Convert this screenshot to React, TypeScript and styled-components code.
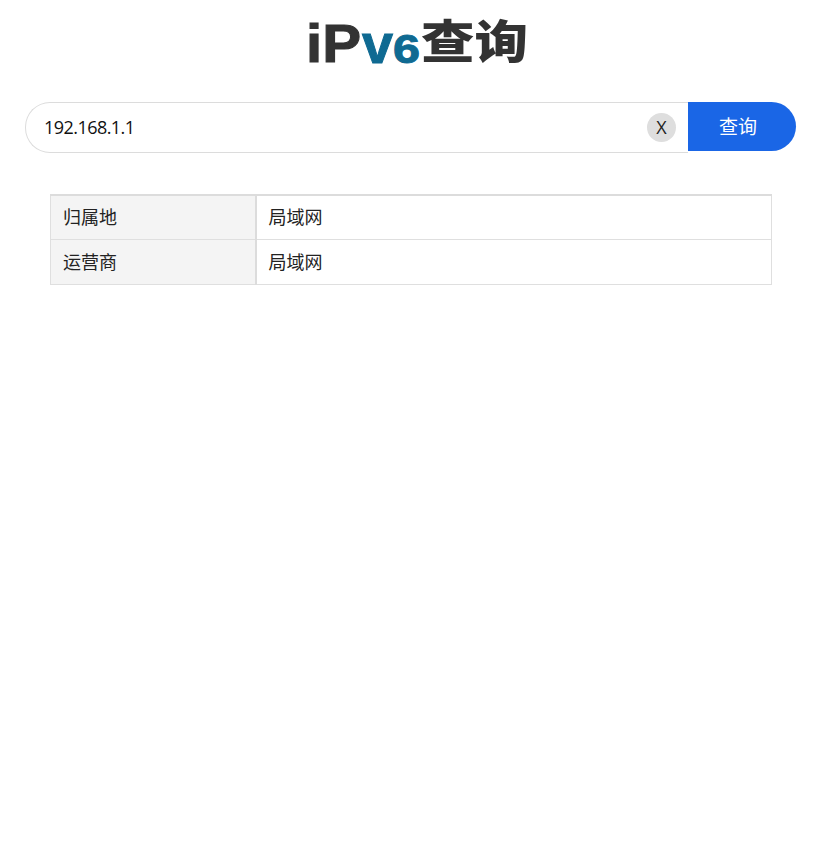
import React, { useState } from 'react'
import styled, { createGlobalStyle } from 'styled-components'

const GlobalStyle = createGlobalStyle`
    html, body {
        margin:0;
        padding:0;
        background:#fff;
        color:#111;
        font-family:"Noto Sans CJK SC","Open Sans",sans-serif;
    }
`;
const Page = styled.div`
    width:834px;
    height:859px;
    overflow:hidden;
`;
const LogoRow = styled.h1`
    height:76px;
    margin:0 0 26px;
    display:flex;
    justify-content:center;
`;
const LogoSvg = styled.svg`
    width:222px;
    height:76px;
    display:block;
`;
const SearchBar = styled.form`
    display:flex;
    align-items:flex-start;
    width:771px;
    margin:0 0 41px 25px;
`;
const InputWrap = styled.div`
    flex:1;
    height:51px;
    display:flex;
    align-items:center;
    box-sizing:border-box;
    border:1px solid #dcdcdc;
    border-right:none;
    border-radius:25px 0 0 25px;
    padding:0 12px 0 18px;
`;
const SearchInput = styled.input`
    flex:1;
    min-width:0;
    border:none;
    outline:none;
    padding:0 0 2px;
    font-family:"Open Sans",sans-serif;
    font-size:18px;
    letter-spacing:-0.55px;
    color:#111;
    background:transparent;
`;
const ClearButton = styled.button`
    width:29px;
    height:29px;
    padding:0;
    border:none;
    border-radius:50%;
    background:#dedede;
    color:#222;
    font-family:"Open Sans",sans-serif;
    font-size:18px;
    line-height:29px;
    text-align:center;
`;
const SubmitButton = styled.button`
    width:108px;
    height:49px;
    border:none;
    border-radius:0 25px 25px 0;
    background:#1a66e6;
    color:#fff;
    font-family:"Noto Sans CJK SC",sans-serif;
    font-size:19px;
    padding:0 8px 3px 0;
`;
const ResultTable = styled.table`
    width:722px;
    margin-left:50px;
    border-collapse:collapse;
    table-layout:fixed;
    border-top:2px solid #dcdcdc;
    font-size:18px;
`;
const Row = styled.tr`
    height:44px;
    &:last-child {
        height:45px;
    }
`;
const LabelCell = styled.td`
    width:205px;
    box-sizing:border-box;
    background:#f4f4f4;
    border:1px solid #dfdfdf;
    border-right:2px solid #dcdcdc;
    padding:0 0 2px 12px;
    color:#222;
`;
const ValueCell = styled.td`
    border:1px solid #dfdfdf;
    padding:0 0 2px 12px;
    color:#222;
`;

const rows = [
    { label: '归属地', value: '局域网' },
    { label: '运营商', value: '局域网' },
];

const App: React.FC = () => {
    const [ip, setIp] = useState('192.168.1.1');

    return (
        <Page>
            <GlobalStyle />
            <LogoRow>
                <LogoSvg viewBox="0 0 222 76" role="img" aria-label="iPv6查询">
                    <text x="0" y="62" fontFamily="'Liberation Sans',sans-serif" fontWeight="700" fontSize="53" fill="#333" stroke="#333" strokeWidth="1" textLength="55" lengthAdjust="spacingAndGlyphs">iP</text>
                    <text x="56" y="63" fontFamily="'Liberation Sans',sans-serif" fontWeight="700" fontSize="56" fill="#0f6a92" stroke="#0f6a92" strokeWidth="1" textLength="31" lengthAdjust="spacingAndGlyphs">v</text>
                    <text x="87" y="63" fontFamily="'Liberation Sans',sans-serif" fontWeight="700" fontSize="41" fill="#0f6a92" stroke="#0f6a92" strokeWidth="1" textLength="27" lengthAdjust="spacingAndGlyphs">6</text>
                    <text x="115" y="58" fontFamily="'Noto Sans CJK SC',sans-serif" fontWeight="900" fontSize="46" fill="#333" textLength="107" lengthAdjust="spacingAndGlyphs">查询</text>
                </LogoSvg>
            </LogoRow>
            <SearchBar onSubmit={(e: React.FormEvent<HTMLFormElement>) => e.preventDefault()}>
                <InputWrap>
                    <SearchInput value={ip} onChange={(e: React.ChangeEvent<HTMLInputElement>) => setIp(e.currentTarget.value)} />
                    <ClearButton type="button" onClick={() => setIp('')}>X</ClearButton>
                </InputWrap>
                <SubmitButton type="submit">查询</SubmitButton>
            </SearchBar>
            <ResultTable>
                <tbody>
                    {rows.map((row) => (
                        <Row key={row.label}>
                            <LabelCell>{row.label}</LabelCell>
                            <ValueCell>{row.value}</ValueCell>
                        </Row>
                    ))}
                </tbody>
            </ResultTable>
        </Page>
    )
}

export default App;
